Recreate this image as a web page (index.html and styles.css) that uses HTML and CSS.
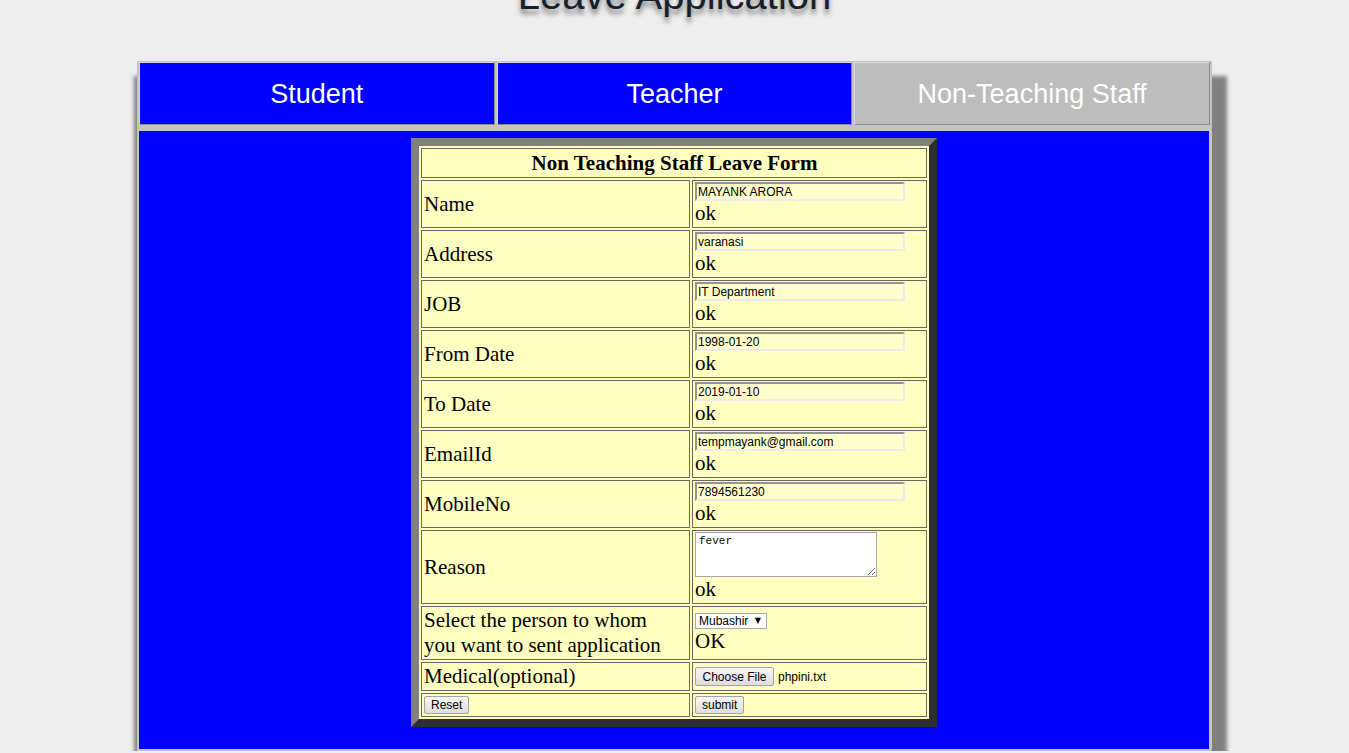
FILE: index.html
```html
<!DOCTYPE html>
<html lang="en">
<head>
<meta charset="utf-8">
<title>Leave Application</title>
<link rel="stylesheet" href="styles.css">
</head>
<body>
<h1 class="title">Leave Application</h1>
<div class="panel">
  <nav class="tabs">
    <div class="tab">Student</div>
    <div class="tab">Teacher</div>
    <div class="tab tab-active">Non-Teaching Staff</div>
  </nav>
  <main class="content">
    <form class="leave-form">
      <table class="form-table">
        <colgroup><col class="col-label"><col class="col-field"></colgroup>
        <tr><th colspan="2" class="form-head">Non Teaching Staff Leave Form</th></tr>
        <tr><td class="label">Name</td><td class="field"><input class="text" type="text" value="MAYANK ARORA"><div class="status">ok</div></td></tr>
        <tr><td class="label">Address</td><td class="field"><input class="text" type="text" value="varanasi"><div class="status">ok</div></td></tr>
        <tr><td class="label">JOB</td><td class="field"><input class="text" type="text" value="IT Department"><div class="status">ok</div></td></tr>
        <tr><td class="label">From Date</td><td class="field"><input class="text" type="text" value="1998-01-20"><div class="status">ok</div></td></tr>
        <tr><td class="label">To Date</td><td class="field"><input class="text" type="text" value="2019-01-10"><div class="status">ok</div></td></tr>
        <tr><td class="label">EmailId</td><td class="field"><input class="text" type="text" value="tempmayank@gmail.com"><div class="status">ok</div></td></tr>
        <tr><td class="label">MobileNo</td><td class="field"><input class="text" type="text" value="7894561230"><div class="status">ok</div></td></tr>
        <tr><td class="label">Reason</td><td class="field"><textarea class="reason">fever</textarea><div class="status">ok</div></td></tr>
        <tr><td class="label">Select the person to whom<br>you want to sent application</td><td class="field"><div class="select-wrap"><select class="person"><option>Mubashir</option></select><span class="caret">&#9660;</span></div><div class="status">OK</div></td></tr>
        <tr><td class="label">Medical(optional)</td><td class="field"><div class="filebox"><button type="button" class="btn btn-file">Choose File</button><span class="filename">phpini.txt</span></div></td></tr>
        <tr><td class="label action"><button type="reset" class="btn">Reset</button></td><td class="field action"><button type="button" class="btn">submit</button></td></tr>
      </table>
    </form>
  </main>
</div>
</body>
</html>
```
FILE: styles.css
```css
html, body {
  margin: 0;
  padding: 0;
}
body {
  background: #eeeeee;
  overflow: hidden;
}
.title {
  margin: -25px 0 0;
  font: normal 40px/40px "Liberation Sans", Arial, sans-serif;
  color: #17212b;
  text-align: center;
  text-shadow: 0 5px 5px #7e7e7e;
}
.panel {
  width: 1075px;
  margin: 46px auto 0;
  padding: 1px 0 2px;
  background: #c4c4c6;
  box-shadow: 6px 24px 4px 9px #808080;
  box-sizing: border-box;
}
.tabs {
  display: grid;
  grid-template-columns: repeat(3, 1fr);
  gap: 2px;
  padding: 0 2px;
}
.tab {
  height: 63px;
  box-sizing: border-box;
  display: flex;
  align-items: center;
  justify-content: center;
  background: #0000ff;
  color: #ffffff;
  font: 27px "Liberation Sans", Arial, sans-serif;
  border: 1px solid;
  border-color: #d8d8e0 #8c8c8c #8c8c8c #d8d8e0;
  padding-top: 1px;
}
.tab-active {
  background: #bdbdbd;
  color: #ffffff;
}
.content {
  margin: 6px 3px 0 2px;
  background: #0000ff;
  padding: 7px 0 22px;
}
.leave-form {
  margin: 0;
}
.form-table {
  table-layout: fixed;
  width: 526px;
  margin: 0 auto;
  border-collapse: separate;
  border-spacing: 2px;
  border: 8px solid;
  border-color: #808080 #2e2e2e #2e2e2e #808080;
  background: #ffffc2;
}
.col-label { width: 269px; }
.col-field { width: 235px; }
.form-table th,
.form-table td {
  border: 1px solid #6a6a5c;
  padding: 1px 1px 1px 2px;
  vertical-align: middle;
  font: 21px/25px "Liberation Serif", "Times New Roman", serif;
  color: #000;
  text-align: left;
}
.form-table th.form-head {
  text-align: center;
  font-weight: bold;
  line-height: 26px;
}
.text {
  display: block;
  width: 210px;
  height: 19px;
  box-sizing: border-box;
  margin: 0;
  padding: 0 1px;
  border: 2px solid;
  border-color: #939393 #ececec #ececec #939393;
  background: #ffffcc;
  font: 12px "Liberation Sans", Arial, sans-serif;
  color: #000;
}
.status {
  line-height: 25px;
}
.reason {
  display: block;
  width: 182px;
  height: 45px;
  box-sizing: border-box;
  margin: 0;
  padding: 2px 3px;
  border: 1px solid #a9a9a9;
  background: #fff;
  font: 11px "Liberation Mono", "Courier New", monospace;
  color: #000;
  resize: both;
}
.select-wrap {
  position: relative;
  width: 72px;
  height: 16px;
}
.person {
  appearance: none;
  -webkit-appearance: none;
  display: block;
  width: 72px;
  height: 16px;
  box-sizing: border-box;
  margin: 0;
  padding: 0 0 0 3px;
  border: 1px solid #a9a9a9;
  border-radius: 0;
  background: #fff;
  font: 12px/14px "Liberation Sans", Arial, sans-serif;
  color: #000;
}
.caret {
  position: absolute;
  right: 6px;
  top: 3px;
  font: 8px/10px "DejaVu Sans", sans-serif;
  color: #000;
  pointer-events: none;
}
.filebox {
  display: flex;
  align-items: center;
  gap: 4px;
}
.filename {
  font: 12px "Liberation Sans", Arial, sans-serif;
}
.btn {
  height: 18px;
  box-sizing: border-box;
  margin: 0;
  padding: 0 6px;
  border: 1px solid #a3a3a3;
  border-radius: 2px;
  background: linear-gradient(#f7f7f7, #dddddd);
  font: 12px/14px "Liberation Sans", Arial, sans-serif;
  color: #000;
}
.btn-file {
  height: 19px;
  width: 79px;
  padding: 0;
}
.action .btn {
  display: block;
  margin: 1px 0;
}
```
